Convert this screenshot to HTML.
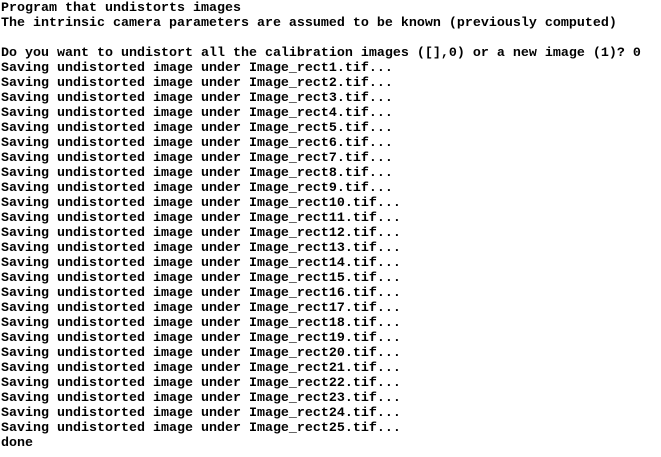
<html><head><style>
body{margin:0;background:#fff;width:661px;height:457px;overflow:hidden}
pre{margin:0;padding:0 0 0 1px;font-family:"Liberation Mono",monospace;font-weight:bold;font-size:13.33px;line-height:15px;color:#000;position:relative;top:1px}
</style></head><body><pre>Program that undistorts images
The intrinsic camera parameters are assumed to be known (previously computed)

Do you want to undistort all the calibration images ([],0) or a new image (1)? 0
Saving undistorted image under Image_rect1.tif...
Saving undistorted image under Image_rect2.tif...
Saving undistorted image under Image_rect3.tif...
Saving undistorted image under Image_rect4.tif...
Saving undistorted image under Image_rect5.tif...
Saving undistorted image under Image_rect6.tif...
Saving undistorted image under Image_rect7.tif...
Saving undistorted image under Image_rect8.tif...
Saving undistorted image under Image_rect9.tif...
Saving undistorted image under Image_rect10.tif...
Saving undistorted image under Image_rect11.tif...
Saving undistorted image under Image_rect12.tif...
Saving undistorted image under Image_rect13.tif...
Saving undistorted image under Image_rect14.tif...
Saving undistorted image under Image_rect15.tif...
Saving undistorted image under Image_rect16.tif...
Saving undistorted image under Image_rect17.tif...
Saving undistorted image under Image_rect18.tif...
Saving undistorted image under Image_rect19.tif...
Saving undistorted image under Image_rect20.tif...
Saving undistorted image under Image_rect21.tif...
Saving undistorted image under Image_rect22.tif...
Saving undistorted image under Image_rect23.tif...
Saving undistorted image under Image_rect24.tif...
Saving undistorted image under Image_rect25.tif...
done</pre></body></html>
